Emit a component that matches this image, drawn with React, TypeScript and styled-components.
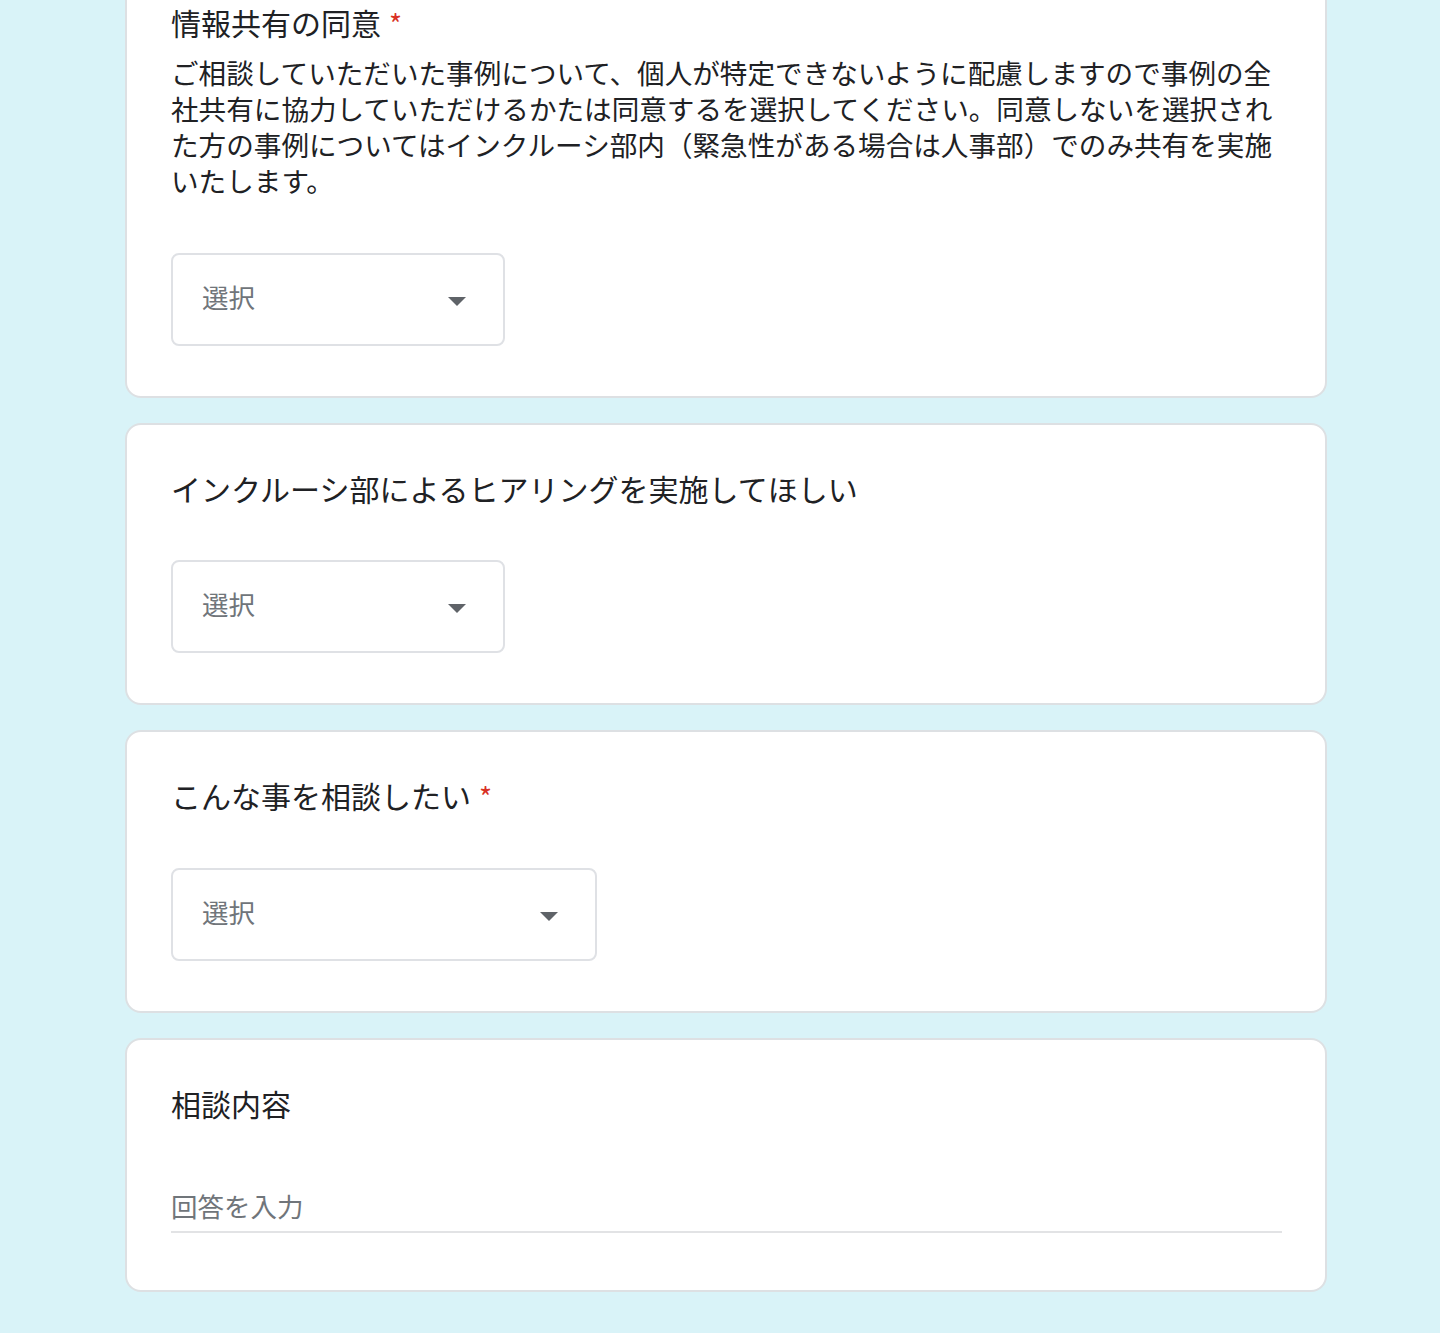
import React from "react";
import styled, { createGlobalStyle } from "styled-components";

const GlobalStyle = createGlobalStyle`
  html, body {
    margin: 0;
    padding: 0;
    background: #d9f3f8;
  }
  body {
    font-family: "Noto Sans CJK JP", "Noto Sans", sans-serif;
    color: #202124;
  }
`;

const Page = styled.div`
  width: 1440px;
  height: 1333px;
  overflow: hidden;
  background: #d9f3f8;
`;

const CardList = styled.div`
  display: flex;
  flex-direction: column;
  gap: 25px;
  width: 1202px;
  margin-left: 125px;
  margin-top: -43px;
`;

const Card = styled.section`
  box-sizing: border-box;
  background: #ffffff;
  border: 2px solid #dde0e3;
  border-radius: 16px;
  padding: 45px 44px 50px 44px;
  display: flex;
  flex-direction: column;
  align-items: flex-start;
`;

const Title = styled.h2`
  margin: 0;
  font-size: 30px;
  font-weight: 400;
  line-height: 36px;
  color: #202124;
  letter-spacing: 0;
`;

const Required = styled.span`
  color: #d93025;
  padding-left: 8px;
  font-size: 28px;
`;

const Description = styled.p`
  margin: 13px 0 0 0;
  width: 1110px;
  font-size: 27.6px;
  line-height: 36px;
  color: #202124;
  word-break: break-all;
`;

const Select = styled.div<{ $width: number; $gap: number }>`
  box-sizing: border-box;
  margin-top: ${(p) => p.$gap}px;
  width: ${(p) => p.$width}px;
  height: 93px;
  border: 2px solid #dfe1e5;
  border-radius: 8px;
  display: flex;
  align-items: center;
  justify-content: space-between;
  padding: 0 37px 0 29px;
`;

const SelectLabel = styled.span`
  font-size: 26.5px;
  line-height: 36px;
  padding-bottom: 6px;
  color: #70757a;
`;

const Arrow = styled.span`
  width: 0;
  height: 0;
  margin-top: 3px;
  border-left: 9.5px solid transparent;
  border-right: 9.5px solid transparent;
  border-top: 9.5px solid #5f6368;
`;

const TextInput = styled.div`
  box-sizing: border-box;
  margin-top: 66.5px;
  margin-bottom: 7px;
  width: 1111px;
  padding-bottom: 7.5px;
  border-bottom: 2px solid #e2e3e5;
  font-size: 26.5px;
  line-height: 36px;
  color: #70757a;
`;

type DropdownProps = { width: number; gap: number };

const Dropdown: React.FC<DropdownProps> = ({ width, gap }) => (
  <Select $width={width} $gap={gap}>
    <SelectLabel>選択</SelectLabel>
    <Arrow />
  </Select>
);

export default function App() {
  return (
    <Page>
      <GlobalStyle />
      <CardList>
        <Card>
          <Title>
            情報共有の同意<Required>*</Required>
          </Title>
          <Description>
            ご相談していただいた事例について、個人が特定できないように配慮しますので事例の全社共有に協力していただけるかたは同意するを選択してください。同意しないを選択された方の事例についてはインクルーシ部内（緊急性がある場合は人事部）でのみ共有を実施いたします。
          </Description>
          <Dropdown width={334} gap={55} />
        </Card>
        <Card>
          <Title>インクルーシ部によるヒアリングを実施してほしい</Title>
          <Dropdown width={334} gap={54} />
        </Card>
        <Card>
          <Title>
            こんな事を相談したい<Required>*</Required>
          </Title>
          <Dropdown width={426} gap={54} />
        </Card>
        <Card>
          <Title>相談内容</Title>
          <TextInput>回答を入力</TextInput>
        </Card>
      </CardList>
    </Page>
  );
}
